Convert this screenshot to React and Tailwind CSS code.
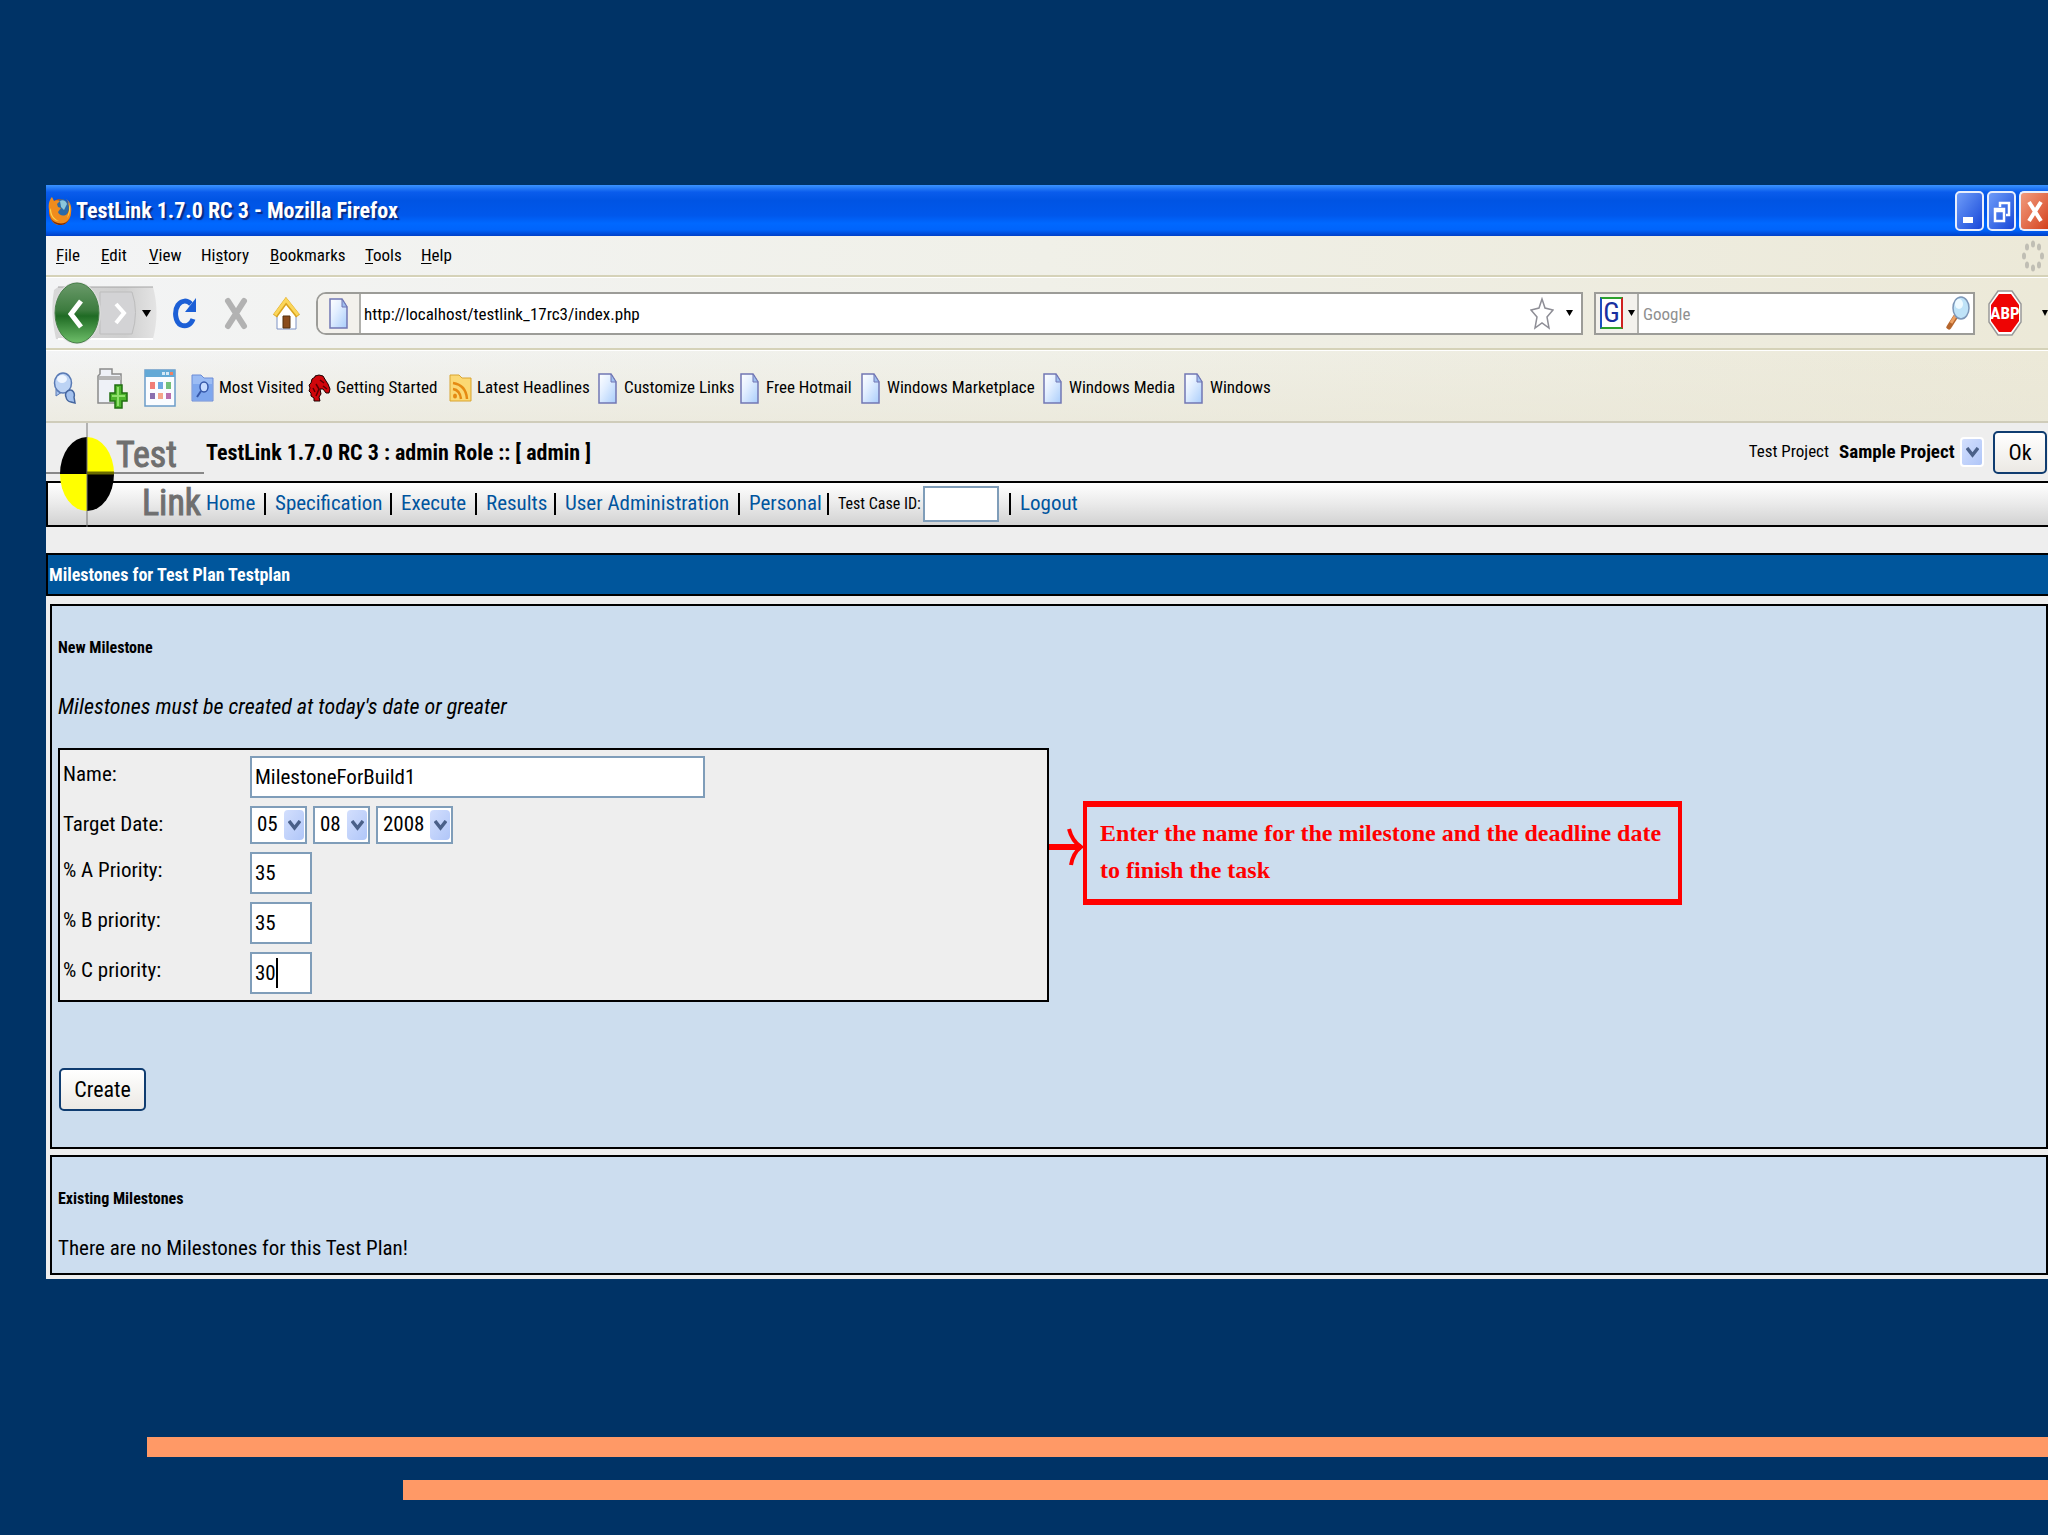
import React from "react";

const SANS = "font-['Roboto_Condensed','Liberation_Sans_Narrow','DejaVu_Sans_Condensed',sans-serif]";

const menus = [
  ["", "F", "ile", "w-[45px]"],
  ["", "E", "dit", "w-[48px]"],
  ["", "V", "iew", "w-[52px]"],
  ["Hi", "s", "tory", "w-[69px]"],
  ["", "B", "ookmarks", "w-[95px]"],
  ["", "T", "ools", "w-[56px]"],
  ["", "H", "elp", "w-[45px]"],
];

function Firefox() {
  return (
    <svg className="h-[30px] w-[24px]" viewBox="0 0 24 30" preserveAspectRatio="none">
      <ellipse cx="12" cy="16" rx="11" ry="13" fill="#c4510c" />
      <ellipse cx="14" cy="12" rx="7" ry="9" fill="#2c6aa8" />
      <path d="M12 5c3-2 6 0 7 3l-3 6-3-3z" fill="#8cc7dc" />
      <path d="M1 14C0 7 2 3 4 1l2 4c2-1 4-1 6 0l-3 3 1 3 3 1-3 4c1 4 7 5 10 1 3-5 2-10-2-14 5 3 6 9 5 14-1 7-5 12-11 12S2 23 1 14z" fill="#f08c1d" />
      <path d="M3 12c0 7 3 11 8 13-5 0-9-5-9-11zM20 6c3 4 3 11-1 16 2-5 3-11 1-16z" fill="#fbd44e" />
      <path d="M3 22c3 6 14 8 18 1-2 5-6 6-9 6s-7-2-9-7z" fill="#7c2c08" />
    </svg>
  );
}

function Caret({ className = "h-[7px] w-[9px]" }) {
  return (
    <svg className={className} viewBox="0 0 9 7" preserveAspectRatio="none">
      <path d="M0 0h9L4.500 7z" fill="#000" />
    </svg>
  );
}

function Page({ className }) {
  return (
    <svg className={"shrink-0 " + className} viewBox="0 0 19 31" preserveAspectRatio="none">
      <defs>
        <linearGradient id="pg" x1="0" y1="0" x2="1" y2="1">
          <stop offset="0" stopColor="#fff" />
          <stop offset="0.400" stopColor="#e3efff" />
          <stop offset="1" stopColor="#a9cdfb" />
        </linearGradient>
      </defs>
      <path d="M1 1h12l5 8v21H1z" fill="url(#pg)" stroke="#7277b4" strokeWidth="1.500" />
      <path d="M13 1v8h5z" fill="#9fc0f0" stroke="#7277b4" />
    </svg>
  );
}

function BackForward() {
  return (
    <div className="relative h-[62px] w-[108px] shrink-0">
      <svg className="absolute inset-0 h-full w-full" viewBox="0 0 108 62">
        <defs>
          <linearGradient id="pill" x1="0" y1="0" x2="1" y2="0">
            <stop offset="0" stopColor="#d8d8d8" />
            <stop offset="0.700" stopColor="#cfcfcf" />
            <stop offset="1" stopColor="#e4e4e4" />
          </linearGradient>
          <linearGradient id="grn" x1="0" y1="0" x2="0" y2="1">
            <stop offset="0" stopColor="#6a9a6a" />
            <stop offset="0.450" stopColor="#3d7c3f" />
            <stop offset="0.550" stopColor="#1f6b24" />
            <stop offset="1" stopColor="#6fbf6a" />
          </linearGradient>
        </defs>
        <path d="M4 8Q0 30 6 57H103Q110 30 103 5H8z" fill="url(#pill)" />
        <path d="M8 5H103" stroke="#a4a4a4" />
        <path d="M8 57H103" stroke="#fff" strokeWidth="2" />
        <path d="M50 10h32q7 20 0 42H50z" fill="#d3d3d5" stroke="#bdbdbd" />
        <path d="M66 22l8 9-8 10" fill="none" stroke="#fff" strokeWidth="4" />
        <ellipse cx="27" cy="31" rx="24" ry="31" fill="#dcdcdc" />
        <ellipse cx="27" cy="31" rx="22" ry="30" fill="url(#grn)" stroke="#477f49" />
        <path d="M31 19L21 32l10 13" fill="none" stroke="#fff" strokeWidth="5" />
      </svg>
      <button aria-label="Back" className="absolute left-0 top-0 h-full w-[50px]" />
      <button aria-label="Forward" className="absolute left-[50px] top-0 h-full w-[34px]" />
      <button aria-label="Recent pages" className="absolute right-[7px] top-[28px]">
        <Caret />
      </button>
    </div>
  );
}

function Reload() {
  return (
    <svg className="h-[33px] w-[25px]" viewBox="0 0 25 33" preserveAspectRatio="none">
      <path d="M20 22c-2 6-7 8-12 6C2 25 1 14 5 8c4-5 9-5 13-1" fill="none" stroke="#1c5fd6" strokeWidth="5" />
      <path d="M23 1v14H12z" fill="#1c5fd6" />
    </svg>
  );
}

function Stop() {
  return (
    <svg className="h-[33px] w-[24px]" viewBox="0 0 24 33" preserveAspectRatio="none">
      <path d="M4 4l16 25M20 4L4 29" stroke="#b2b2b2" strokeWidth="6" strokeLinecap="round" />
    </svg>
  );
}

function House() {
  return (
    <svg className="h-[33px] w-[27px]" viewBox="0 0 27 33" preserveAspectRatio="none">
      <path d="M4 15l9-11 10 11v17H4z" fill="#fff" stroke="#7d92c4" />
      <path d="M10 19h7v12h-7z" fill="#8a4c1c" stroke="#54300f" />
      <path d="M2 19L13 4l12 15" fill="none" stroke="#d9a21d" strokeWidth="5" />
      <path d="M2 18L13 3l12 15" fill="none" stroke="#fbd65a" strokeWidth="3" />
    </svg>
  );
}

function Star() {
  return (
    <svg className="h-[33px] w-[24px]" viewBox="0 0 24 33" preserveAspectRatio="none">
      <path d="M12 2l3 9 8 2-6 7 2 11-7-5-7 5 2-11-6-7 8-2z" fill="#fff" stroke="#8e8e96" strokeWidth="1.500" />
    </svg>
  );
}

function Glass() {
  return (
    <svg className="h-[34px] w-[24px]" viewBox="0 0 24 34" preserveAspectRatio="none">
      <path d="M10 20L3 31" stroke="#b5652c" strokeWidth="5" strokeLinecap="round" />
      <path d="M10 19L5 27" stroke="#eea264" strokeWidth="3" />
      <ellipse cx="15" cy="12" rx="8" ry="11" fill="#bfe3f8" stroke="#7d97b8" strokeWidth="1.500" />
      <ellipse cx="13" cy="8" rx="4" ry="5" fill="#eefaff" />
    </svg>
  );
}

function Abp() {
  return (
    <button aria-label="Adblock Plus" className="flex">
      <svg className="h-[46px] w-[34px]" viewBox="0 0 34 46">
        <path d="M10 1h14l9 13v18l-9 13H10L1 32V14z" fill="#fff" stroke="#999" strokeWidth="1.500" />
        <path d="M11 4h12l8 11v16l-8 11H11L3 31V15z" fill="#ee0404" />
        <text x="17" y="29" textAnchor="middle" fontSize="17" fontWeight="700" fill="#fff">ABP</text>
      </svg>
    </button>
  );
}

function Throbber() {
  return (
    <svg className="h-[32px] w-[22px]" viewBox="0 0 22 32" preserveAspectRatio="none" fill="#c0beb4">
      {[[11, 4], [17, 7], [20, 16], [17, 25], [11, 28], [5, 25], [2, 16], [5, 7]].map(([x, y]) => (
        <ellipse key={x + "-" + y} cx={x} cy={y} rx="2" ry="3.500" />
      ))}
    </svg>
  );
}

function FolderSearch() {
  return (
    <svg className="h-[28px] w-[23px] shrink-0" viewBox="0 0 23 28" preserveAspectRatio="none">
      <path d="M1 1h9l3 3h9v23H1z" fill="#9bbcf4" stroke="#6a8bd6" />
      <path d="M2 10h19v16H2z" fill="#7ea7ee" />
      <ellipse cx="13" cy="13" rx="4" ry="5" fill="#c7dcff" stroke="#3557a8" strokeWidth="1.500" />
      <path d="M10 17l-4 6" stroke="#3557a8" strokeWidth="2" />
    </svg>
  );
}

function Dino() {
  return (
    <svg className="h-[28px] w-[23px] shrink-0" viewBox="0 0 23 28" preserveAspectRatio="none">
      <path d="M7 2l4-1 4 1 3 5 2 3 2 5-1 4-3 0-3-4-3 0 1 5-2 3 1 4H6l0-3-3-2 0-3-2-2 1-3-1-3 2-2 1-4 3-2z" fill="#d0060b" stroke="#1c0000" />
      <path d="M12 6l4 3M8 10l3 5-3 7M15 12l4 3M5 14l2 4" stroke="#5b0003" strokeWidth="1.500" fill="none" />
    </svg>
  );
}

function Rss() {
  return (
    <svg className="h-[28px] w-[23px] shrink-0" viewBox="0 0 23 28" preserveAspectRatio="none">
      <path d="M1 1h9l3 3h9v23H1z" fill="#fbd873" stroke="#d9a431" />
      <ellipse cx="6" cy="22" rx="2" ry="2.500" fill="#e58a12" />
      <path d="M4 15q7 1 8 10M4 9q13 2 14 16" fill="none" stroke="#e58a12" strokeWidth="2.500" />
    </svg>
  );
}

function BookmarkPage() {
  return <Page className="h-[31px] w-[19px]" />;
}

const bookmarks = [
  [FolderSearch, "Most Visited", "w-[117px]", "gap-[5px]"],
  [Dino, "Getting Started", "w-[141px]", "gap-[5px]"],
  [Rss, "Latest Headlines", "w-[149px]", "gap-[5px]"],
  [BookmarkPage, "Customize Links", "w-[142px]", "gap-[7px]"],
  [BookmarkPage, "Free Hotmail", "w-[121px]", "gap-[7px]"],
  [BookmarkPage, "Windows Marketplace", "w-[182px]", "gap-[7px]"],
  [BookmarkPage, "Windows Media", "w-[141px]", "gap-[7px]"],
  [BookmarkPage, "Windows", "w-[100px]", "gap-[7px]"],
];

function Bubble() {
  return (
    <svg className="h-[32px] w-[23px]" viewBox="0 0 23 32" preserveAspectRatio="none">
      <path d="M3 17l0 7 6-4" fill="#a9c5ee" stroke="#5879b4" />
      <ellipse cx="10" cy="11" rx="8.500" ry="10" fill="#bcd3f4" stroke="#5879b4" strokeWidth="1.500" />
      <ellipse cx="9" cy="7" rx="5" ry="4" fill="#eef5ff" />
      <path d="M17 18a4 5 0 014 7l1 6-4-1a6 6 0 01-5-5 5 5 0 014-7z" fill="#a3c1ee" stroke="#45669f" strokeWidth="1.500" />
    </svg>
  );
}

function TabAdd() {
  return (
    <svg className="h-[41px] w-[32px]" viewBox="0 0 32 41" preserveAspectRatio="none">
      <path d="M2 35V8l2-2V1h12v5h9v29z" fill="#eef1f7" stroke="#8b8b8b" strokeWidth="1.500" />
      <path d="M3 8h22v4H3z" fill="#b5b5b5" />
      <path d="M19 17h7v8h5v8h-5v7h-7v-7h-5v-8h5z" fill="#4db52c" stroke="#216f12" strokeWidth="1.500" />
      <path d="M22 19v19M16 28h13" stroke="#8fe06c" strokeWidth="2" />
    </svg>
  );
}

function Grid() {
  return (
    <svg className="h-[38px] w-[32px]" viewBox="0 0 32 38" preserveAspectRatio="none">
      <rect x="1" y="1" width="30" height="36" fill="#fafcff" stroke="#6b9cc9" strokeWidth="1.500" />
      <path d="M1 1h30v7H1z" fill="#63a9d6" />
      <path d="M18 3h3v3h-3zM22 3h3v3h-3z" fill="#d5e8f5" />
      <path d="M26 3h3v3h-3z" fill="#f08060" />
      <path d="M6 13h5v7H6z" fill="#f07d77" />
      <path d="M14 13h5v7h-5z" fill="#6ea8e0" />
      <path d="M22 13h5v7h-5z" fill="#74c07a" />
      <path d="M6 24h5v6H6z" fill="#8a6fae" />
      <path d="M14 24h5v6h-5z" fill="#f5a58a" />
      <path d="M22 24h5v6h-5z" fill="#b96fae" />
    </svg>
  );
}

function Logo() {
  return (
    <svg className="absolute left-0 top-0 h-[104px] w-[158px]" viewBox="0 0 158 104">
      <path d="M0 50h158" stroke="#888" strokeWidth="2" />
      <path d="M41 51V14A27 37 0 0014 51z" fill="#000" />
      <path d="M41 51V14A27 37 0 0168 51z" fill="#ff0" />
      <path d="M41 51H14A27 37 0 0041 88z" fill="#ff0" />
      <path d="M41 51H68A27 37 0 0141 88z" fill="#000" />
      <path d="M41 0V104" stroke="#777" />
      <path d="M41 50h27" stroke="#6b6b00" strokeWidth="3" />
      <g fontSize="36" fill="#6f6f6f" stroke="#6f6f6f">
        <text x="70" y="44">Test</text>
        <text x="96" y="92">Link</text>
      </g>
    </svg>
  );
}

function Chevron({ className }) {
  return (
    <span className={"pointer-events-none absolute flex items-center justify-center rounded-sm bg-linear-to-br from-[#d3dffd] to-[#b0c6f8] " + className}>
      <svg className="h-[11px] w-[13px]" viewBox="0 0 13 11" preserveAspectRatio="none">
        <path d="M1 1l5.500 7L12 1" fill="none" stroke="#4a6089" strokeWidth="3.500" />
      </svg>
    </span>
  );
}

function DateSelect({ label, value, width }) {
  return (
    <span className={"relative flex h-[38px] " + width}>
      <select aria-label={label} defaultValue={value} className="h-full w-full appearance-none border-2 border-[#7f9db9] bg-white pl-[5px] text-[21px] text-black">
        <option>{value}</option>
      </select>
      <Chevron className="bottom-[4px] right-[3px] top-[4px] w-[20px]" />
    </span>
  );
}

const navLinks = [
  ["Home", "w-[69px]"],
  ["Specification", "w-[126px]"],
  ["Execute", "w-[85px]"],
  ["Results", "w-[79px]"],
  ["User Administration", "w-[184px]"],
  ["Personal", "w-[89px]"],
];

function WinButton({ label, color, children }) {
  return (
    <button aria-label={label} className={"flex h-[40px] w-[29px] items-center justify-center rounded-[5px] border-2 border-[#e8eefc] " + color}>
      <svg className="h-[28px] w-[20px]" viewBox="0 0 20 28">{children}</svg>
    </button>
  );
}

const fieldClass = "h-[42px] border-2 border-[#7f9db9] bg-white px-[3px] text-[21px] text-black outline-none";
const buttonClass = "h-[43px] rounded-[5px] border-2 border-[#0f3c70] bg-linear-to-b from-white to-[#ece9e4] text-[22px] text-black";

export default function App() {
  return (
    <div className={"flex min-h-screen flex-col overflow-hidden bg-[#003366] text-black " + SANS}>
      <div className="ml-[46px] mt-[185px] bg-[#eeeeee]">
        <header className="flex h-[51px] items-center gap-[4px] bg-[linear-gradient(to_bottom,#3a93ff_0%,#0a5cec_14%,#0054e3_30%,#0058ec_60%,#0068ff_75%,#0064fb_88%,#0040c8_100%)] pl-[2px]">
          <Firefox />
          <h1 className="flex-1 whitespace-nowrap text-[22px] font-bold text-white [text-shadow:2px_2px_1px_#0a2a80]">TestLink 1.7.0 RC 3 - Mozilla Firefox</h1>
          <div className="flex gap-[3px]">
            <WinButton label="Minimize" color="bg-linear-to-br from-[#6f9bf8] to-[#1a45d8]">
              <path d="M3 20h10v6H3z" fill="#fff" />
            </WinButton>
            <WinButton label="Restore" color="bg-linear-to-br from-[#6f9bf8] to-[#1a45d8]">
              <path d="M8 10V6h9v12h-3M3 12h9v12H3zM3 14h9M8 6h9" fill="none" stroke="#fff" strokeWidth="2.500" />
            </WinButton>
            <WinButton label="Close" color="border-r-0 rounded-r-none bg-linear-to-br from-[#f09a7c] to-[#d4401a]">
              <path d="M4 5l12 19M16 5L4 24" stroke="#fff" strokeWidth="4" />
            </WinButton>
          </div>
        </header>

        <div className="bg-linear-to-r from-[#f3f4f5] via-[#f0f0e8] to-[#ece9d8]">
          <nav className="flex h-[41px] items-center border-b-2 border-[#d5d2b8] pl-[10px]" aria-label="Menu bar">
            {menus.map(([a, u, b, w]) => (
              <button key={u + b} className={"whitespace-nowrap text-left text-[17px] " + w}>
                {a}<span className="underline underline-offset-2">{u}</span>{b}
              </button>
            ))}
            <span className="ml-auto mr-[4px]"><Throbber /></span>
          </nav>

          <div className="flex h-[73px] items-center border-b-2 border-[#d5d2b8] border-t border-t-white pl-[4px]">
            <BackForward />
            <button aria-label="Reload" className="ml-[15px]"><Reload /></button>
            <button aria-label="Stop" className="ml-[26px]"><Stop /></button>
            <button aria-label="Home page" className="ml-[25px]"><House /></button>
            <div className="ml-[16px] flex h-[43px] flex-1 items-center rounded-l-[10px] border-2 border-[#9c9c98] bg-white">
              <span className="flex h-full w-[43px] items-center justify-center rounded-l-[8px] border-r-2 border-[#b0b0ac] bg-[#f3f1ec]">
                <Page className="h-[31px] w-[19px]" />
              </span>
              <input aria-label="Address" defaultValue="http://localhost/testlink_17rc3/index.php" className="h-full min-w-0 flex-1 pl-[3px] pt-[2px] text-[17px] outline-none" />
              <button aria-label="Bookmark this page"><Star /></button>
              <button aria-label="Address history" className="ml-[12px] mr-[8px]"><Caret className="h-[6px] w-[7px]" /></button>
            </div>
            <div className="ml-[11px] flex h-[43px] w-[381px] items-center border-2 border-[#9c9c98] bg-white">
              <button aria-label="Search engine" className="flex h-full w-[43px] items-center gap-[5px] border-r-2 border-[#b0b0ac] bg-[#f3f1ec] pl-[4px]">
                <span className="flex h-[32px] w-[23px] items-center justify-center border-2 border-b-[#2ca02c] border-l-[#1c4fc0] border-r-[#d02020] border-t-[#2ca02c] bg-white text-[28px] leading-none text-[#1a2fa0]">G</span>
                <Caret className="h-[6px] w-[7px]" />
              </button>
              <input aria-label="Search" placeholder="Google" className="h-full min-w-0 flex-1 pl-[4px] pt-[2px] text-[17px] outline-none placeholder:text-[#8f8f8f]" />
              <button aria-label="Go" className="mr-[3px]"><Glass /></button>
            </div>
            <div className="ml-[13px] flex w-[60px] items-center justify-between">
              <Abp />
              <Caret className="h-[6px] w-[6px]" />
            </div>
          </div>

          <div className="flex h-[73px] items-center border-b-2 border-[#cfccba] border-t border-t-white bg-linear-to-b from-transparent to-[#e9e6d6]/60 pl-[7px] pt-[4px]">
            <button aria-label="Sidebar search" className="w-[43px]"><Bubble /></button>
            <button aria-label="New tab" className="w-[48px]"><TabAdd /></button>
            <button aria-label="Speed dial" className="w-[47px]"><Grid /></button>
            {bookmarks.map(([Icon, text, w, gap]) => (
              <a key={text} href="#" className={"flex items-center whitespace-nowrap text-[17px] " + w + " " + gap}>
                <Icon />
                {text}
              </a>
            ))}
          </div>
        </div>

        <div className="relative">
          <div className="flex h-[58px] items-center pl-[160px] pr-px">
            <h2 className="flex-1 whitespace-nowrap text-[22px] font-bold">TestLink 1.7.0 RC 3 : admin Role :: [ admin ]</h2>
            <label htmlFor="project" className="mr-[10px] text-[17px]">Test Project</label>
            <span className="relative mr-[9px] flex h-[30px] w-[145px]">
              <select id="project" className="h-full w-full appearance-none bg-transparent text-[19px] font-bold">
                <option>Sample Project</option>
              </select>
              <Chevron className="bottom-0 right-0 top-0 w-[24px] border-2 border-white" />
            </span>
            <button className={buttonClass + " w-[54px]"}>Ok</button>
          </div>

          <nav className="flex h-[46px] items-center border-y-2 border-l-2 border-black bg-linear-to-b from-white via-[#eaeaea] via-50% to-[#d2d2d2] pl-[158px] text-[21px]" aria-label="Main">
            {navLinks.map(([text, w]) => (
              <span key={text} className={"flex items-center justify-between whitespace-nowrap pr-[9px] " + w}>
                <a href="#" className="text-[#00549e]">{text}</a>
                <span className="h-[22px] w-[2px] bg-black" />
              </span>
            ))}
            <label htmlFor="caseid" className="w-[85px] whitespace-nowrap text-[16px]">Test Case ID:</label>
            <input id="caseid" className="h-[36px] w-[76px] border-2 border-[#7f9db9] bg-white outline-none" />
            <span className="ml-[10px] mr-[9px] h-[22px] w-[2px] bg-black" />
            <a href="#" className="text-[#00549e]">Logout</a>
          </nav>
          <Logo />
        </div>

        <h2 className="mt-[26px] flex h-[43px] items-center border-y-2 border-l-2 border-black bg-[#00569c] pl-px text-[18px] font-bold text-white">Milestones for Test Plan Testplan</h2>

        <main className="flex flex-col gap-[6px] pb-[4px] pl-[4px] pt-[8px]">
          <section className="border-2 border-black bg-[#ccddee] pb-[36px] pl-[6px]">
            <h3 className="mt-[27px] text-[16px] font-bold leading-[30px]">New Milestone</h3>
            <p className="mt-[28px] text-[22px] italic leading-[32px]">Milestones must be created at today's date or greater</p>
            <div className="mt-[25px] flex items-center">
              <form className="grid w-[calc(50%-3px)] grid-cols-[187px_1fr] gap-y-[8px] border-2 border-black bg-[#eeeeee] py-[6px] pl-[3px] text-[21px]">
                <label htmlFor="name" className="leading-[36px]">Name:</label>
                <input id="name" defaultValue="MilestoneForBuild1" className={fieldClass + " w-[455px]"} />
                <span className="leading-[36px]">Target Date:</span>
                <div className="flex gap-[6px]">
                  <DateSelect label="Month" value="05" width="w-[57px]" />
                  <DateSelect label="Day" value="08" width="w-[57px]" />
                  <DateSelect label="Year" value="2008" width="w-[77px]" />
                </div>
                <label htmlFor="pa" className="leading-[36px]">% A Priority:</label>
                <input id="pa" defaultValue="35" className={fieldClass + " w-[62px]"} />
                <label htmlFor="pb" className="leading-[36px]">% B priority:</label>
                <input id="pb" defaultValue="35" className={fieldClass + " w-[62px]"} />
                <label htmlFor="pc" className="leading-[36px]">% C priority:</label>
                <div className="relative flex">
                  <input id="pc" defaultValue="30" className={fieldClass + " w-[62px]"} />
                  <span className="absolute left-[26px] top-[6px] h-[30px] w-[2px] bg-black" />
                </div>
              </form>
              <svg className="-mt-[56px] h-[40px] w-[34px]" viewBox="0 0 34 40">
                <path d="M0 20h32" stroke="#f00" strokeWidth="6" />
                <path d="M20 2q3 12 12 18Q24 26 22 38" fill="none" stroke="#f00" strokeWidth="4" />
              </svg>
              <p className="-mt-[44px] h-[104px] w-[599px] border-x-4 border-y-[6px] border-[#f00] px-[13px] py-[8px] font-['Liberation_Serif',serif] text-[24px] font-bold leading-[37px] text-[#f00]">
                Enter the name for the milestone and the deadline date to finish the task
              </p>
            </div>
            <button className={buttonClass + " ml-[1px] mt-[66px] block w-[87px]"}>Create</button>
          </section>

          <section className="border-2 border-black bg-[#ccddef] pb-[8px] pl-[6px] pt-[27px]">
            <h3 className="text-[16px] font-bold leading-[30px]">Existing Milestones</h3>
            <p className="mt-[17px] text-[21px] leading-[34px]">There are no Milestones for this Test Plan!</p>
          </section>
        </main>
      </div>

      <footer className="mt-[158px] flex flex-col gap-[23px]">
        <div className="ml-[147px] h-[20px] bg-[#ff9966]" />
        <div className="ml-[403px] h-[20px] bg-[#ff9966]" />
      </footer>
    </div>
  );
}
